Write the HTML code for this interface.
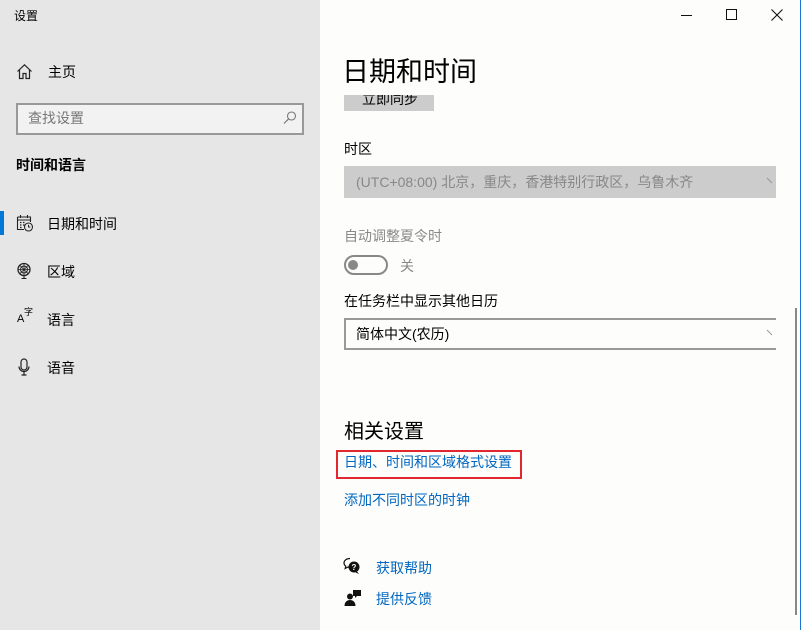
<!DOCTYPE html>
<html><head><meta charset="utf-8">
<style>
*{margin:0;padding:0;box-sizing:border-box}
body{width:801px;height:630px;overflow:hidden;position:relative;background:#fdfdfc;font-family:"Liberation Sans","Noto Sans CJK SC","Microsoft YaHei",sans-serif;font-size:14px;color:#000}
.a{position:absolute;white-space:nowrap;line-height:20px}
#side{position:absolute;left:0;top:0;width:320px;height:630px;background:#e6e6e6}
.link{color:#0067c0}
svg{position:absolute}
</style></head><body>
<div id="side">
  <div class="a" style="left:14px;top:6px;font-size:12px">设置</div>
  <svg style="left:16px;top:63px" width="17" height="17" viewBox="0 0 17 17"><path d="M1.5 8.5 L8.5 1.8 L15.5 8.5 M3.5 6.8 V15.5 H7 V10.5 H10 V15.5 H13.5 V6.8" fill="none" stroke="#222" stroke-width="1.2"/></svg>
  <div class="a" style="left:48px;top:62px">主页</div>
  <div style="position:absolute;left:16px;top:103px;width:288px;height:32px;border:2px solid #999;background:#f2f2f2"></div>
  <div class="a" style="left:28px;top:108px;color:#777">查找设置</div>
  <svg style="left:282px;top:110px" width="16" height="16" viewBox="0 0 16 16"><circle cx="9.5" cy="6" r="4" fill="none" stroke="#777" stroke-width="1.1"/><path d="M6.7 8.8 L2 13.5" stroke="#777" stroke-width="1.2"/></svg>
  <div class="a" style="left:16px;top:155px;font-weight:bold">时间和语言</div>
  <div style="position:absolute;left:0;top:211px;width:4px;height:24px;background:#0078d7"></div>
  <svg style="left:16px;top:214px" width="18" height="18" viewBox="0 0 18 18"><path d="M1.5 3 H14.5 V8 M1.5 3 V15.5 H8 M1.5 6 H14.5 M4.5 1 V4 M11.5 1 V4" fill="none" stroke="#222" stroke-width="1.1"/><path d="M4 8.5h1.5M7 8.5h1.5M4 11h1.5M7 11h1.5M4 13.5h1.5" stroke="#222" stroke-width="1.2"/><circle cx="12.5" cy="13" r="4" fill="#e6e6e6" stroke="#222" stroke-width="1.1"/><path d="M12.5 10.7V13H14.3" fill="none" stroke="#222" stroke-width="1"/></svg>
  <div class="a" style="left:47px;top:214px">日期和时间</div>
  <svg style="left:16px;top:262px" width="18" height="18" viewBox="0 0 18 18"><circle cx="8" cy="7.5" r="6" fill="none" stroke="#222" stroke-width="1.3"/><circle cx="8" cy="7.5" r="3.5" fill="none" stroke="#222" stroke-width="1"/><path d="M2 7.5h12M8 1.5v12M4 3.5l8 8M12 3.5l-8 8" stroke="#222" stroke-width=".8"/><path d="M8 14v2.5M5.5 16.5h5" stroke="#222" stroke-width="1.1"/></svg>
  <div class="a" style="left:47px;top:262px">区域</div>
  <div class="a" style="left:17px;top:313px;font-size:11px;line-height:12px">A</div>
  <div class="a" style="left:24px;top:307px;font-size:9px;line-height:10px">字</div>
  <div class="a" style="left:47px;top:310px">语言</div>
  <svg style="left:16px;top:358px" width="16" height="18" viewBox="0 0 16 18"><rect x="5" y="1" width="6" height="11" rx="3" fill="none" stroke="#222" stroke-width="1.2"/><path d="M3 8.5a5 5 0 0 0 10 0M8 13.5V17M5.5 17h5" fill="none" stroke="#222" stroke-width="1.2"/></svg>
  <div class="a" style="left:47px;top:358px">语音</div>
</div>

<div style="position:absolute;left:681px;top:15px;width:11px;height:1px;background:#111"></div>
<div style="position:absolute;left:726px;top:9px;width:11px;height:11px;border:1px solid #111"></div>
<svg style="left:771px;top:9px" width="12" height="12" viewBox="0 0 12 12"><path d="M0.5 0.5L11.5 11.5M11.5 0.5L0.5 11.5" stroke="#111" stroke-width="1.1"/></svg>

<div style="position:absolute;left:320px;top:95px;width:476px;height:535px;overflow:hidden">
  <div style="position:absolute;left:24px;top:-15px;width:90px;height:31px;background:#ccc"></div>
  <div class="a" style="left:42px;top:-6px">立即同步</div>
</div>
<div class="a" style="left:342px;top:53px;font-size:27px;line-height:38px">日期和时间</div>

<div class="a" style="left:344px;top:139px">时区</div>
<div style="position:absolute;left:344px;top:166px;width:432px;height:32px;background:#ccc"></div>
<div class="a" style="left:356px;top:172px;color:#888">(UTC+08:00) 北京，重庆，香港特别行政区，乌鲁木齐</div>
<svg style="left:766px;top:176px" width="10" height="10" viewBox="0 0 10 10"><path d="M1 2L6 7" stroke="#999" stroke-width="1"/></svg>

<div class="a" style="left:344px;top:226px;color:#888">自动调整夏令时</div>
<div style="position:absolute;left:344px;top:255px;width:44px;height:20px;border:2px solid #888;border-radius:10px"></div>
<div style="position:absolute;left:348px;top:260px;width:10px;height:10px;border-radius:5px;background:#888"></div>
<div class="a" style="left:400px;top:256px;color:#888">关</div>

<div class="a" style="left:344px;top:291px">在任务栏中显示其他日历</div>
<div style="position:absolute;left:344px;top:318px;width:432px;height:32px;border:2px solid #999;border-right:none"></div>
<div class="a" style="left:356px;top:324px">简体中文(农历)</div>
<svg style="left:766px;top:328px" width="10" height="10" viewBox="0 0 10 10"><path d="M1 2L6 7" stroke="#999" stroke-width="1"/></svg>

<div class="a" style="left:344px;top:419px;font-size:20px;line-height:26px">相关设置</div>
<div style="position:absolute;left:336px;top:450px;width:186px;height:29px;border:2px solid #e0282e"></div>
<div class="a link" style="left:344px;top:452px">日期、时间和区域格式设置</div>
<div class="a link" style="left:344px;top:490px">添加不同时区的时钟</div>

<svg style="left:343px;top:557px" width="18" height="18" viewBox="0 0 18 18"><path d="M7 1.5C3.5 1.5 1 3.5 1 6c0 1.3.7 2.4 1.8 3.2L2.2 11.5 5 10c.6.2 1.2.3 2 .3" fill="none" stroke="#111" stroke-width="1.2"/><circle cx="11" cy="10" r="5.5" fill="#111"/><path d="M14 14.5l2 2.5-3.5-1.5z" fill="#111"/><text x="11" y="13" font-size="8" font-weight="bold" fill="#fff" text-anchor="middle" font-family="Liberation Sans">?</text></svg>
<div class="a link" style="left:376px;top:558px">获取帮助</div>
<svg style="left:344px;top:589px" width="18" height="18" viewBox="0 0 18 18"><circle cx="6" cy="7.5" r="3" fill="#111"/><path d="M0.5 17c0-4 2.5-6 5.5-6s5.5 2 5.5 6z" fill="#111"/><path d="M9 1h8v6h-4l-2 2V7H9z" fill="#111"/></svg>
<div class="a link" style="left:376px;top:589px">提供反馈</div>

<div style="position:absolute;left:795px;top:308px;width:2px;height:307px;background:#888"></div>
<div style="position:absolute;left:800px;top:0;width:1px;height:630px;background:#1a73d9"></div>
</body></html>
